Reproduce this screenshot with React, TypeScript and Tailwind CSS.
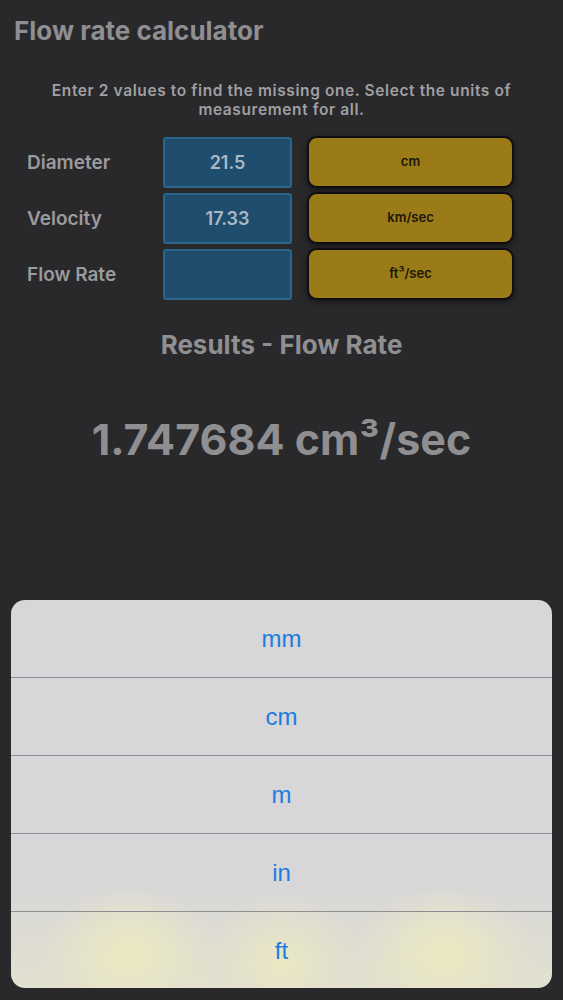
import React from 'react';

const rows = [
  { label: 'Diameter', value: '21.5', unit: 'cm' },
  { label: 'Velocity', value: '17.33', unit: 'km/sec' },
  { label: 'Flow Rate', value: '', unit: 'ft³/sec' },
];

const options = ['mm', 'cm', 'm', 'in', 'ft'];

export default function App() {
  return (
    <div
      className="flex h-[1000px] w-full flex-col overflow-hidden bg-[#29282b]"
      style={{ fontFamily: 'Inter, "Noto Sans", "Liberation Sans", sans-serif' }}
    >
      <h1 className="pl-[14px] pt-[15px] text-[26px] font-bold leading-[32px] text-[#8f8e91]">
        Flow rate calculator
      </h1>

      <p className="mx-auto mt-[34px] w-[530px] text-center text-[15.5px] font-semibold leading-[19px] tracking-[0.6px] text-[#a09fa2]">
        Enter 2 values to find the missing one. Select the units of measurement for all.
      </p>

      <div className="mt-[17px] flex flex-col gap-[4px] pl-[27px]">
        {rows.map((r) => (
          <div key={r.label} className="flex h-[52px] items-center">
            <div className="w-[136px] pt-[2px] text-[19px] font-semibold text-[#9b9a9d]">{r.label}</div>
            <div className="flex h-[51px] w-[129px] items-center justify-center rounded-[3px] border-2 border-[#2d6489] bg-[#1f4d6d] text-[18px] font-semibold text-[#a9b9c6]">
              {r.value}
            </div>
            <div className="ml-[15px] flex h-[52px] w-[207px] items-center justify-center rounded-[10px] border-[2px] border-[#0f0e10] bg-[#9a7b17] text-[13px] font-semibold text-[#1a1608] shadow-[0_2px_6px_rgba(0,0,0,0.5)]">
              {r.unit}
            </div>
          </div>
        ))}
      </div>

      <h2 className="mt-[25px] text-center text-[26px] font-bold text-[#8f8e91]">Results - Flow Rate</h2>

      <div className="mt-[43px] text-center text-[43px] font-bold text-[#8f8e91]">
        1.747684 cm³/sec
      </div>

      <div className="mx-[11px] mb-[12px] mt-auto h-[388px] overflow-hidden rounded-[14px] bg-[#d7d6d9] bg-[radial-gradient(ellipse_90px_70px_at_22%_92%,#ece9c0_0%,#e6e4c9_45%,transparent_100%),radial-gradient(ellipse_80px_70px_at_50%_94%,#ebe8c2_0%,#e4e2cb_45%,transparent_100%),radial-gradient(ellipse_90px_70px_at_80%_92%,#ece9c0_0%,#e6e4c9_45%,transparent_100%),linear-gradient(to_bottom,transparent_70%,#e2e0cf_100%)]">
        <div className="flex flex-col">
          {options.map((o, i) => (
            <React.Fragment key={o}>
              {i > 0 && <div className="h-px bg-[#8e8d91]" />}
              <div
                className="flex h-[77px] items-center justify-center text-[24px] text-[#1b7ddf]"
                style={{ fontFamily: '"Liberation Sans", Arial, sans-serif' }}
              >
                {o}
              </div>
            </React.Fragment>
          ))}
        </div>
      </div>
    </div>
  );
}
